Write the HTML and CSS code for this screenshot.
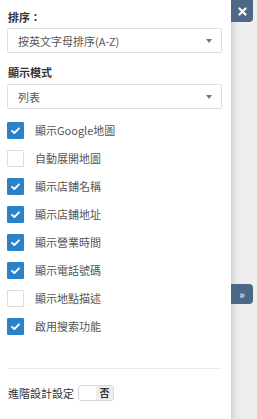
FILE: index.html
```html
<html>
<head>
    <meta http-equiv="Content-Type" content="text/html; charset=UTF-8" />
    <title>地圖設定</title>
    <link rel="stylesheet" href="styles.css">
</head>
<body>

<div class="wrap">
    <div class="panel">
        <div class="fieldLabel">排序：</div>
        <div class="selectBox">
            <span>按英文字母排序(A-Z)</span>
            <i class="caret"></i>
        </div>

        <div class="fieldLabel second">顯示模式</div>
        <div class="selectBox">
            <span>列表</span>
            <i class="caret"></i>
        </div>

        <ul class="checkList">
            <li><span class="chk on"></span>顯示Google地圖</li>
            <li><span class="chk"></span>自動展開地圖</li>
            <li><span class="chk on"></span>顯示店鋪名稱</li>
            <li><span class="chk on"></span>顯示店鋪地址</li>
            <li><span class="chk on"></span>顯示營業時間</li>
            <li><span class="chk on"></span>顯示電話號碼</li>
            <li><span class="chk"></span>顯示地點描述</li>
            <li><span class="chk on"></span>啟用搜索功能</li>
        </ul>

        <div class="divider"></div>

        <div class="advRow">
            <span class="advLabel">進階設計設定</span>
            <span class="toggle"><span class="toggleOff"></span><span class="toggleNo">否</span></span>
        </div>
    </div>

    <div class="side">
        <a class="sideBtn closeBtn" href="#">
            <svg width="9" height="9" viewBox="0 0 9 9"><path d="M1.5 1.5 L7.5 7.5 M7.5 1.5 L1.5 7.5" stroke="#fff" stroke-width="2.2" stroke-linecap="round"/></svg>
        </a>
        <a class="sideBtn expandBtn" href="#">»</a>
    </div>
</div>

</body>
</html>
```

FILE: styles.css
```css
html, body {
    margin: 0;
    padding: 0;
}

body {
    font-family: "Noto Sans CJK TC", "Noto Sans", sans-serif;
    font-size: 11px;
    color: #555;
    background: #ececec;
}

.wrap {
    display: flex;
    width: 257px;
    height: 419px;
}

.panel {
    width: 231px;
    height: 419px;
    box-sizing: border-box;
    background: #fff;
    padding: 10px 9px 0 7px;
}

.fieldLabel {
    font-weight: bold;
    color: #333;
    line-height: 14px;
    margin-bottom: 4px;
    padding-left: 1px;
}

.fieldLabel.second {
    margin-top: 12px;
    margin-bottom: 5px;
}

.selectBox {
    display: flex;
    align-items: center;
    justify-content: space-between;
    height: 25px;
    box-sizing: border-box;
    border: 1px solid #dedede;
    border-radius: 2px;
    padding: 0 9px 0 10px;
    color: #555;
    font-size: 11px;
}

.caret {
    width: 0;
    height: 0;
    border-left: 3.5px solid transparent;
    border-right: 3.5px solid transparent;
    border-top: 4px solid #777;
}

.checkList {
    list-style: none;
    margin: 7px 0 0 0;
    padding: 0;
}

.checkList li {
    display: flex;
    align-items: center;
    height: 28px;
    color: #555;
}

.chk {
    width: 17px;
    height: 17px;
    box-sizing: border-box;
    border: 1px solid #ddd;
    border-radius: 1px;
    margin-right: 11px;
    background: #fff;
}

.chk.on {
    border-color: #2b82c9;
    background: #2b82c9 url("data:image/svg+xml;utf8,<svg xmlns='http://www.w3.org/2000/svg' width='17' height='17'><path d='M5 8.8 L7.4 11 L12 6.3' fill='none' stroke='white' stroke-width='1.8' stroke-linecap='round' stroke-linejoin='round'/></svg>") no-repeat -1px -1px;
}

.divider {
    height: 1px;
    background: #ececec;
    margin-top: 28px;
    margin-left: 1px;
}

.advRow {
    display: flex;
    align-items: center;
    margin-top: 16px;
    padding-left: 1px;
}

.advLabel {
    color: #333;
    width: 70px;
}

.toggle {
    display: flex;
    width: 36px;
    height: 16px;
    box-sizing: border-box;
    border: 1px solid #d8d8d8;
    border-radius: 3px;
    overflow: hidden;
}

.toggleOff {
    flex: 1;
    background: #fff;
}

.toggleNo {
    width: 17px;
    background: #eeeeee;
    color: #333;
    font-size: 10px;
    font-weight: bold;
    text-align: center;
    line-height: 14px;
}

.side {
    width: 26px;
    display: flex;
    flex-direction: column;
    background: linear-gradient(to right, #d4d4d4, #e9e9e9 5px, #efefef 12px);
}

.sideBtn {
    width: 22px;
    height: 22px;
    display: flex;
    align-items: center;
    justify-content: center;
    background: #4b6887;
    color: #fff;
    text-decoration: none;
    border-radius: 0 0 4px 0;
}

.expandBtn {
    margin-top: 262px;
    height: 20px;
    border-radius: 0 4px 4px 0;
    font-size: 11px;
    font-weight: bold;
    color: #dfe6ee;
    line-height: 20px;
}
```
